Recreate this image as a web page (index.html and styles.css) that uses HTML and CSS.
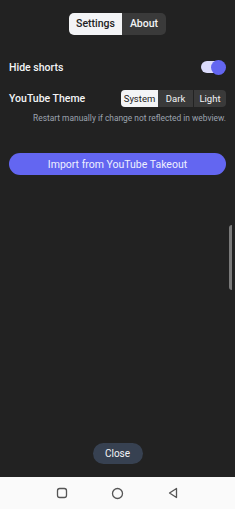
FILE: index.html
```html
<!DOCTYPE html>
<html>
<head>
<meta charset="utf-8">
<link rel="stylesheet" href="styles.css">
</head>
<body>
<div class="screen">
  <div class="content">
    <div class="tabs">
      <div class="tab active">Settings</div>
      <div class="tab">About</div>
    </div>
    <div class="row row-shorts">
      <span class="label">Hide shorts</span>
      <div class="toggle"><div class="track"></div><div class="thumb"></div></div>
    </div>
    <div class="row row-theme">
      <span class="label">YouTube Theme</span>
      <div class="seg">
        <div class="seg-item active">System</div>
        <div class="seg-item">Dark</div>
        <div class="seg-item">Light</div>
      </div>
    </div>
    <div class="hint">Restart manually if change not reflected in webview.</div>
    <button class="import">Import from YouTube Takeout</button>
    <div class="spacer"></div>
    <button class="close">Close</button>
    <div class="edge-handle"></div>
  </div>
  <nav class="navbar">
    <svg width="12" height="12" viewBox="0 0 12 12"><rect x="1.5" y="1.5" width="9" height="9" rx="2.2" fill="none" stroke="#555" stroke-width="1.3"/></svg>
    <svg width="13" height="13" viewBox="0 0 13 13"><circle cx="6.5" cy="6.5" r="5" fill="none" stroke="#555" stroke-width="1.3"/></svg>
    <svg width="12" height="12" viewBox="0 0 12 12"><path d="M9.5 1.5 L2.5 6 L9.5 10.5 Z" fill="none" stroke="#555" stroke-width="1.3" stroke-linejoin="round"/></svg>
  </nav>
</div>
</body>
</html>
```
FILE: styles.css
```css
* { box-sizing: border-box; }
html, body { margin: 0; padding: 0; }
body {
  width: 235px;
  height: 509px;
  overflow: hidden;
  background: #222222;
  font-family: Roboto, "Liberation Sans", sans-serif;
  color: #f3f4f6;
}
.screen { display: flex; flex-direction: column; height: 509px; }
.content {
  position: relative;
  flex: 1;
  display: flex;
  flex-direction: column;
  padding: 13px 9px 13px 9px;
}
.tabs {
  display: flex;
  justify-content: center;
  height: 22px;
}
.tab {
  height: 22px;
  line-height: 22px;
  font-size: 10.5px;
  font-weight: 500;
  background: #3a3a3a;
  color: #f3f4f6;
  border-radius: 0 5px 5px 0;
  width: 44px;
  text-align: center;
}
.tab.active {
  background: #f3f4f6;
  color: #222;
  border-radius: 5px 0 0 5px;
  width: 53px;
}
.row {
  display: flex;
  align-items: center;
  justify-content: space-between;
}
.row-shorts { margin-top: 25px; height: 14px; }
.row-theme { margin-top: 16px; height: 17px; }
.label { font-size: 10.5px; font-weight: 500; color: #f3f4f6; }
.toggle {
  position: relative;
  width: 25px;
  height: 14px;
}
.track {
  position: absolute;
  left: 0; top: 1px;
  width: 22px; height: 12px;
  border-radius: 6px;
  background: #dcdcfc;
}
.thumb {
  position: absolute;
  right: 0;
  top: -0.5px;
  width: 15px; height: 15px;
  border-radius: 50%;
  background: #6366f1;
}
.seg {
  display: flex;
  background: #3a3a3a;
  border-radius: 4px;
  height: 17px;
}
.seg-item {
  font-size: 9.5px;
  font-weight: 400;
  line-height: 17px;
  text-align: center;
  color: #f3f4f6;
}
.seg-item:nth-child(1) { width: 37px; background: #f3f4f6; color: #222; border-radius: 4px 0 0 4px; }
.seg-item:nth-child(2) { width: 35px; }
.seg-item:nth-child(3) { width: 33px; border-left: 1px solid #222; }
.hint {
  margin-top: 6px;
  text-align: right;
  font-size: 8.4px;
  color: #9ca3af;
}
.import {
  margin-top: 30px;
  height: 22px;
  border: none;
  border-radius: 11px;
  background: #6366f1;
  color: #eef0ff;
  font-family: inherit;
  font-size: 10.5px;
  font-weight: 400;
  padding: 0;
}
.spacer { flex: 1; }
.close {
  align-self: center;
  width: 50px;
  height: 21px;
  border: none;
  border-radius: 11px;
  background: #374151;
  color: #f3f4f6;
  font-family: inherit;
  font-size: 10px;
  padding: 0;
}
.edge-handle {
  position: absolute;
  right: 3px;
  top: 225px;
  width: 3px;
  height: 65px;
  border-radius: 3px 0 0 3px;
  background: #7a7a7a;
}
.navbar {
  height: 32px;
  background: #fafafa;
  display: flex;
  align-items: center;
  justify-content: center;
  gap: 43px;
}
```
